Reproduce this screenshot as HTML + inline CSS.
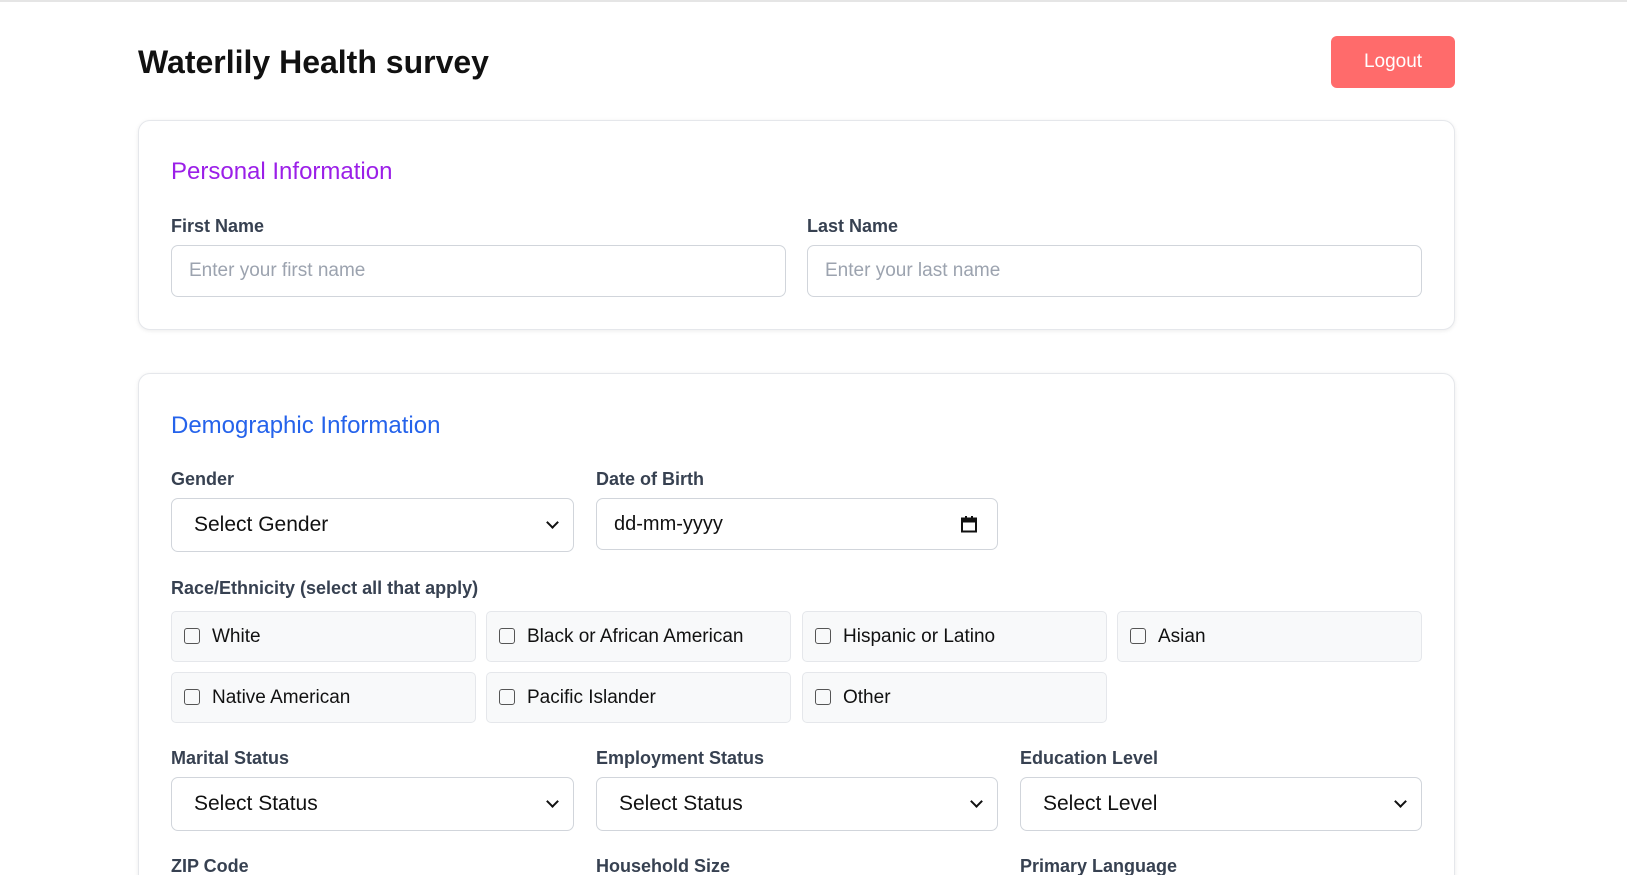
<!DOCTYPE html>
<html style="height:875px;overflow:hidden"><head><meta charset="utf-8"><style>
*{box-sizing:border-box;margin:0;padding:0}
body{width:1627px;height:875px;overflow:hidden;background:#fff;font-family:"Liberation Sans",sans-serif;border-top:2px solid #e5e5e5;position:relative}
.a{position:absolute}
h1{position:absolute;left:138px;top:42px;font-size:32px;font-weight:bold;color:#111}
.btn{left:1331px;top:34px;width:124px;height:52px;background:#ff6b6b;border-radius:6px;color:#fff;font-size:19px;display:flex;align-items:center;justify-content:center}
.card{left:138px;width:1317px;border:1px solid #e5e7eb;border-radius:12px;box-shadow:0 1px 4px rgba(0,0,0,.08);background:#fff}
.h2{font-size:24px}
.lbl{font-size:18px;font-weight:bold;color:#374151}
.in{border:1px solid #d1d5db;border-radius:7px;height:52px;display:flex;align-items:center;padding-left:17px;font-size:19px;color:#9ca3af}
.sel{border:1px solid #d1d5db;border-radius:7px;height:54px;display:flex;align-items:center;padding-left:22px;font-size:21px;color:#111}
.sel:after{content:"";position:absolute;right:16px;top:19px;width:7px;height:7px;border-right:2px solid #111;border-bottom:2px solid #111;transform:rotate(45deg)}
.cb{height:51px;background:#f8f9fa;border:1px solid #e5e7eb;border-radius:5px;display:flex;align-items:center;padding-left:12px;font-size:19px;color:#111}
.cb i{width:16px;height:16px;border:1.5px solid #555;border-radius:3px;margin-right:12px;display:inline-block;position:relative;top:-1px}
</style></head><body>
<h1>Waterlily Health survey</h1>
<div class="a btn">Logout</div>
<div class="a card" style="top:118px;height:210px"></div>
<div class="a h2" style="left:171px;top:156px;color:#9b1fe8">Personal Information</div>
<div class="a lbl" style="left:171px;top:214px">First Name</div>
<div class="a lbl" style="left:807px;top:214px">Last Name</div>
<div class="a in" style="left:171px;top:243px;width:615px">Enter your first name</div>
<div class="a in" style="left:807px;top:243px;width:615px">Enter your last name</div>

<div class="a card" style="top:371px;height:520px"></div>
<div class="a h2" style="left:171px;top:410px;color:#2563eb">Demographic Information</div>
<div class="a lbl" style="left:171px;top:467px">Gender</div>
<div class="a lbl" style="left:596px;top:467px">Date of Birth</div>
<div class="a sel" style="left:171px;top:496px;width:403px">Select Gender</div>
<div class="a in" style="left:596px;top:496px;width:402px;color:#111;font-size:20px">dd-mm-yyyy
<svg style="position:absolute;right:20px;top:17px" width="16" height="17" viewBox="0 0 16 17"><rect x="1" y="2.5" width="14" height="13" fill="none" stroke="#111" stroke-width="2"/><rect x="1" y="2.5" width="14" height="4" fill="#111"/><rect x="4" y="0" width="2" height="3" fill="#111"/><rect x="10" y="0" width="2" height="3" fill="#111"/></svg></div>
<div class="a lbl" style="left:171px;top:576px">Race/Ethnicity (select all that apply)</div>
<div class="a cb" style="left:171px;top:609px;width:305px"><i></i>White</div>
<div class="a cb" style="left:486px;top:609px;width:305px"><i></i>Black or African American</div>
<div class="a cb" style="left:802px;top:609px;width:305px"><i></i>Hispanic or Latino</div>
<div class="a cb" style="left:1117px;top:609px;width:305px"><i></i>Asian</div>
<div class="a cb" style="left:171px;top:670px;width:305px"><i></i>Native American</div>
<div class="a cb" style="left:486px;top:670px;width:305px"><i></i>Pacific Islander</div>
<div class="a cb" style="left:802px;top:670px;width:305px"><i></i>Other</div>
<div class="a lbl" style="left:171px;top:746px">Marital Status</div>
<div class="a lbl" style="left:596px;top:746px">Employment Status</div>
<div class="a lbl" style="left:1020px;top:746px">Education Level</div>
<div class="a sel" style="left:171px;top:775px;width:403px">Select Status</div>
<div class="a sel" style="left:596px;top:775px;width:402px">Select Status</div>
<div class="a sel" style="left:1020px;top:775px;width:402px">Select Level</div>
<div class="a lbl" style="left:171px;top:854px">ZIP Code</div>
<div class="a lbl" style="left:596px;top:854px">Household Size</div>
<div class="a lbl" style="left:1020px;top:854px">Primary Language</div>
</body></html>
